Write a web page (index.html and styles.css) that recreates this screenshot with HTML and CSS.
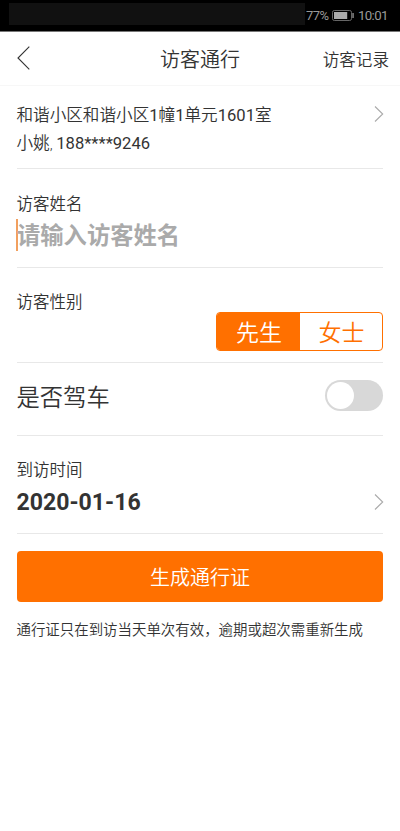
FILE: index.html
```html
<!DOCTYPE html>
<html lang="zh-CN">
<head>
<meta charset="utf-8">
<title>访客通行</title>
<link rel="stylesheet" href="styles.css">
</head>
<body>
<div class="status">
  <span class="mask"></span>
  <span class="pct">77%</span>
  <svg class="battery" width="22" height="11" viewBox="0 0 22 11"><rect x=".5" y=".5" width="19" height="10" rx="1.8" fill="none" stroke="#666"/><rect x="2" y="2" width="13.2" height="7" fill="#aaa"/><rect x="20.4" y="3" width="1.3" height="5" fill="#999"/></svg>
  <span class="clock">10:01</span>
</div>
<header class="nav">
  <svg class="back" width="14" height="24" viewBox="0 0 14 24"><path d="M12.3.7 1 12l11.3 11.3" fill="none" stroke="#333" stroke-width="1.1"/></svg>
  <h1 class="title">访客通行</h1>
  <span class="records">访客记录</span>
</header>
<main class="form">
  <section class="row address">
    <div><p class="line">和谐小区和谐小区<span class="num">1</span>幢<span class="num">1</span>单元<span class="num">1601</span>室</p><p class="line">小姚<span class="comma">, </span><span class="num">188****9246</span></p></div>
    <svg class="chev" width="10" height="18" viewBox="0 0 10 18"><path d="m1 1.5 7.7 7.5L1 16.5" fill="none" stroke="#aaa" stroke-width="1.1"/></svg>
  </section>
  <section class="row name">
    <p class="label">访客姓名</p>
    <p class="placeholder">请输入访客姓名</p>
  </section>
  <section class="row gender">
    <p class="label">访客性别</p>
    <div class="segment"><span class="opt on">先生</span><span class="opt">女士</span></div>
  </section>
  <section class="row drive"><span class="big">是否驾车</span><span class="toggle"><i class="knob"></i></span></section>
  <section class="row date">
    <div><p class="label">到访时间</p><p class="value">2020-01-16</p></div>
    <svg class="chev" width="10" height="18" viewBox="0 0 10 18"><path d="m1 1.5 7.7 7.5L1 16.5" fill="none" stroke="#aaa" stroke-width="1.1"/></svg>
  </section>
  <button class="submit">生成通行证</button>
  <p class="note">通行证只在到访当天单次有效，逾期或超次需重新生成</p>
</main>
</body>
</html>
```
FILE: styles.css
```css
* { box-sizing: border-box; }
body { margin: 0; height: 831px; background: #fff; color: #333; font-family: Roboto, "Noto Sans CJK SC", sans-serif; font-weight: 350; }
h1, p { margin: 0; font-weight: inherit; }
.status { display: flex; align-items: center; height: 32px; padding: 0 12px 0 9px; border-bottom: 1px solid #777; background: #000; color: #999; font-size: 13px; font-weight: 400; }
.mask { width: 296px; height: 22px; margin-top: -3px; background: #111; }
.pct { margin-left: 1px; font-size: 13px; letter-spacing: -.5px; }
.battery { margin-left: auto; }
.clock { margin-left: 4px; font-size: 13.3px; letter-spacing: -.6px; }
.nav { display: grid; grid-template-columns: 1fr auto 1fr; align-items: center; height: 54px; padding: 0 11px 0 17px; border-bottom: 1px solid #f7f7f7; }
.title { position: relative; left: -3px; padding-top: 2px; font-size: 20px; line-height: 28px; }
.back { margin-top: -1px; }
.records { justify-self: end; font-size: 16.6px; }
.form { padding: 0 16.6px 0 16.5px; }
.row { border-bottom: 1px solid #e8e8e8; }
.label { font-size: 16.5px; line-height: 24px; }
.address { display: flex; justify-content: space-between; height: 83px; padding-top: 16px; }
.line { font-size: 16.6px; line-height: 28px; }
.num { font-weight: 400; }
.comma { font-weight: 300; font-size: 15px; }
.chev { margin-right: -.5px; }
.address .chev { margin-top: 3px; }
.name { height: 99px; padding-top: 24px; }
.placeholder { height: 32px; margin: 2px 0 0 -.5px; border-left: 2px solid #f2a05f; color: #aaa; font-size: 23.3px; font-weight: 700; line-height: 35px; text-indent: -1px; }
.gender { height: 95px; padding-top: 23px; }
.segment { display: flex; width: 167px; height: 39px; margin: -3px 0 0 auto; border: 1px solid #ff7000; border-radius: 4px; overflow: hidden; }
.opt { flex: 1; color: #ff7000; font-size: 23px; line-height: 41px; text-align: center; }
.on { flex: 0 0 83px; background: #ff7000; color: #fff; }
.drive { display: flex; align-items: center; justify-content: space-between; height: 73px; padding-bottom: 8px; }
.big { padding-top: 1px; font-size: 23.3px; }
.toggle { width: 58px; height: 31px; padding: 2px; border-radius: 16px; background: #d8d8d8; }
.knob { display: block; width: 27px; height: 27px; border-radius: 50%; background: #fff; }
.date { display: flex; justify-content: space-between; height: 98px; padding-top: 23px; }
.value { margin-top: 4px; font-size: 23.1px; font-weight: 700; line-height: 32px; }
.date .chev { margin-top: 34px; }
.submit { display: block; width: 100%; height: 51px; margin: 17px 0 0; padding: 3px 0 0; border: 0; border-radius: 4px; background: #ff7000; color: #fff; font: 350 20px/48px Roboto, "Noto Sans CJK SC", sans-serif; }
.note { margin-top: 18px; font-size: 14.45px; line-height: 22px; white-space: nowrap; }
```
